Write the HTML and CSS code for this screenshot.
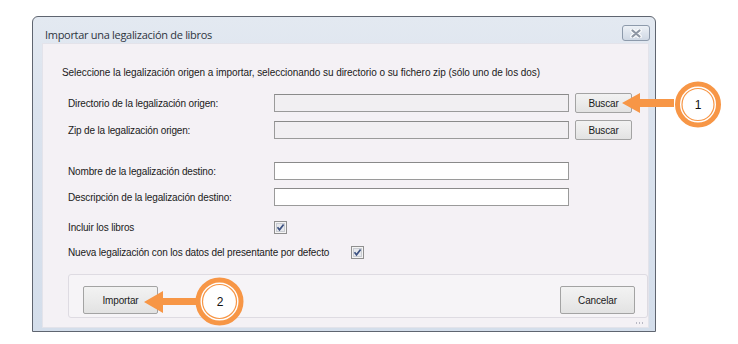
FILE: index.html
```html
<!DOCTYPE html>
<html lang="es">
<head>
<meta charset="UTF-8" />
<title>Importar una legalización de libros</title>
<link rel="stylesheet" href="styles.css">
</head>
<body>

<div class="window">
  <div class="titlebar">
    <span class="title">Importar una legalización de libros</span>
    <button class="close" title="Cerrar">
      <svg width="14" height="9" viewBox="0 0 14 9">
        <path d="M3.5 1.5 L10.5 7.5 M10.5 1.5 L3.5 7.5" stroke="#fbfcfd" stroke-width="4.5" stroke-linecap="round" />
        <path d="M3.5 1.5 L10.5 7.5 M10.5 1.5 L3.5 7.5" stroke="#8d96a3" stroke-width="2.2" stroke-linecap="round" />
      </svg>
    </button>
  </div>

  <div class="client">
    <p class="intro">Seleccione la legalización origen a importar, seleccionando su directorio o su fichero zip (sólo uno de los dos)</p>

    <div class="row row-dir">
      <span class="label">Directorio de la legalización origen:</span>
      <input class="field readonly" type="text" readonly>
      <button class="btn btn-small">Buscar</button>
    </div>

    <div class="row row-zip">
      <span class="label">Zip de la legalización origen:</span>
      <input class="field readonly" type="text" readonly>
      <button class="btn btn-small">Buscar</button>
    </div>

    <div class="row row-name">
      <span class="label">Nombre de la legalización destino:</span>
      <input class="field" type="text">
    </div>

    <div class="row row-desc">
      <span class="label">Descripción de la legalización destino:</span>
      <input class="field" type="text">
    </div>

    <div class="row row-books">
      <span class="label">Incluir los libros</span>
      <span class="check">
        <svg width="13" height="13" viewBox="0 0 13 13">
          <rect x="0.5" y="0.5" width="12" height="12" fill="#f4f4f4" stroke="#8f8f8f" />
          <rect x="2.5" y="2.5" width="8" height="8" fill="#e6e8ec" stroke="#c9ccd2" />
          <path d="M3.5 6.3 L5.5 8.8 L9.6 3.4" fill="none" stroke="#3d5282" stroke-width="1.7" />
        </svg>
      </span>
    </div>

    <div class="row row-default">
      <span class="label label-wide">Nueva legalización con los datos del presentante por defecto</span>
      <span class="check">
        <svg width="13" height="13" viewBox="0 0 13 13">
          <rect x="0.5" y="0.5" width="12" height="12" fill="#f4f4f4" stroke="#8f8f8f" />
          <rect x="2.5" y="2.5" width="8" height="8" fill="#e6e8ec" stroke="#c9ccd2" />
          <path d="M3.5 6.3 L5.5 8.8 L9.6 3.4" fill="none" stroke="#3d5282" stroke-width="1.7" />
        </svg>
      </span>
    </div>

    <div class="actions">
      <button class="btn btn-big">Importar</button>
      <button class="btn btn-big">Cancelar</button>
    </div>

    <span class="grip"></span>
  </div>
</div>

<!-- llamadas numeradas -->
<svg class="callout callout-1" width="104" height="52" viewBox="618 80 104 52">
  <polygon points="622,103 640,93 640,99 674,99 674,107 640,107 640,113" fill="#f79646" />
  <circle cx="698" cy="104.5" r="20.5" fill="#fff" stroke="#f79646" stroke-width="5" />
  <circle cx="698" cy="104.5" r="16" fill="#fff" stroke="#f79646" stroke-width="1.2" />
  <text x="698" y="109" text-anchor="middle" class="callout-num">1</text>
</svg>

<svg class="callout callout-2" width="110" height="56" viewBox="140 274 110 56">
  <polygon points="144,302 163,291 163,298 198,298 198,305 163,305 163,313" fill="#f79646" />
  <circle cx="219.5" cy="301.5" r="21.5" fill="#fff" stroke="#f79646" stroke-width="5" />
  <circle cx="219.5" cy="301.5" r="17" fill="#fff" stroke="#f79646" stroke-width="1.2" />
  <text x="220" y="306" text-anchor="middle" class="callout-num">2</text>
</svg>

</body>
</html>
```

FILE: styles.css
```css
body {
  margin: 0;
  background: #fff;
  font-family: "Liberation Sans", Arial, sans-serif;
  font-size: 10px;
  color: #1a1a1a;
  position: relative;
  width: 738px;
  height: 344px;
  overflow: hidden;
}

/* ventana */
.window {
  margin: 16px 0 0 32px;
  border: 1px solid #5f6570;
  border-radius: 6px 6px 0 0;
  background: linear-gradient(180deg, #e3e9f1 0%, #dbe3ee 30%, #d4deeb 100%);
  padding: 0 6px 3px 9px;
  box-sizing: content-box;
  display: flex;
  flex-direction: column;
  width: 607px;
  height: 311px;
}
.titlebar {
  height: 26px;
  display: flex;
  align-items: flex-start;
  justify-content: space-between;
}
.title {
  font-family: "Open Sans", "Liberation Sans", sans-serif;
  font-size: 11px;
  letter-spacing: -0.3px;
  color: #2e3540;
  margin: 10px 0 0 3px;
  line-height: 15px;
}
.close {
  margin: 8px -1px 0 0;
  width: 28px;
  height: 16px;
  padding: 0;
  border: 1px solid #8d9aab;
  border-radius: 3px;
  background: linear-gradient(180deg, #edf1f6 0%, #dde4ed 50%, #cfd8e4 100%);
  display: flex;
  align-items: center;
  justify-content: center;
}

.client {
  flex: 1;
  background: #f4f1f5;
  border: 1px solid #e3e3ea;
  box-sizing: border-box;
  position: relative;
  display: flex;
  flex-direction: column;
}
.intro {
  margin: 22px 0 0 19px;
  line-height: 13px;
  letter-spacing: -0.06px;
}

.row {
  display: flex;
  align-items: center;
  height: 20px;
}
.row-dir { margin-top: 14px; }
.row-zip { margin-top: 7px; }
.row-name { margin-top: 21px; }
.row-desc { margin-top: 6px; }
.row-books { margin-top: 10px; }
.row-default { margin-top: 5px; }

.label {
  width: 231px;
  padding-left: 25px;
  box-sizing: border-box;
  letter-spacing: -0.15px;
  white-space: nowrap;
}
.label-wide {
  width: 308px;
}
.field {
  width: 295px;
  height: 18px;
  box-sizing: border-box;
  margin: 0;
  border: 1px solid #9a9a9a;
  border-top-color: #8a8a8a;
  background: #fff;
  font: inherit;
}
.field.readonly {
  background: #f1eff2;
}
.check {
  display: inline-flex;
}

.btn {
  font-family: "Liberation Sans", Arial, sans-serif;
  font-size: 10px;
  letter-spacing: -0.15px;
  color: #1a1a1a;
  border: 1px solid #a3a3a3;
  border-radius: 2px;
  background: linear-gradient(180deg, #f2f2f2 0%, #ebebeb 50%, #e2e2e2 100%);
  padding: 0;
}
.btn-small {
  width: 57px;
  height: 20px;
  margin-left: 6px;
}
.btn-big {
  width: 75px;
  height: 28px;
}

.actions {
  margin: 12px 0 0 25px;
  width: 580px;
  height: 44px;
  box-sizing: border-box;
  border: 1px solid #dedbe2;
  border-radius: 3px;
  background: #f6f4f7;
  display: flex;
  justify-content: space-between;
  align-items: flex-start;
  padding: 11px 12px 0 14px;
}

.grip {
  position: absolute;
  right: 4px;
  bottom: 3px;
  width: 8px;
  height: 2px;
  background: repeating-linear-gradient(90deg, #b9b9c4 0 1px, transparent 1px 3px);
}

/* llamadas */
.callout {
  position: absolute;
}
.callout-1 {
  left: 618px;
  top: 80px;
}
.callout-2 {
  left: 140px;
  top: 274px;
}
.callout-num {
  font-family: "Liberation Sans", Arial, sans-serif;
  font-size: 12px;
  fill: #111;
}
```
